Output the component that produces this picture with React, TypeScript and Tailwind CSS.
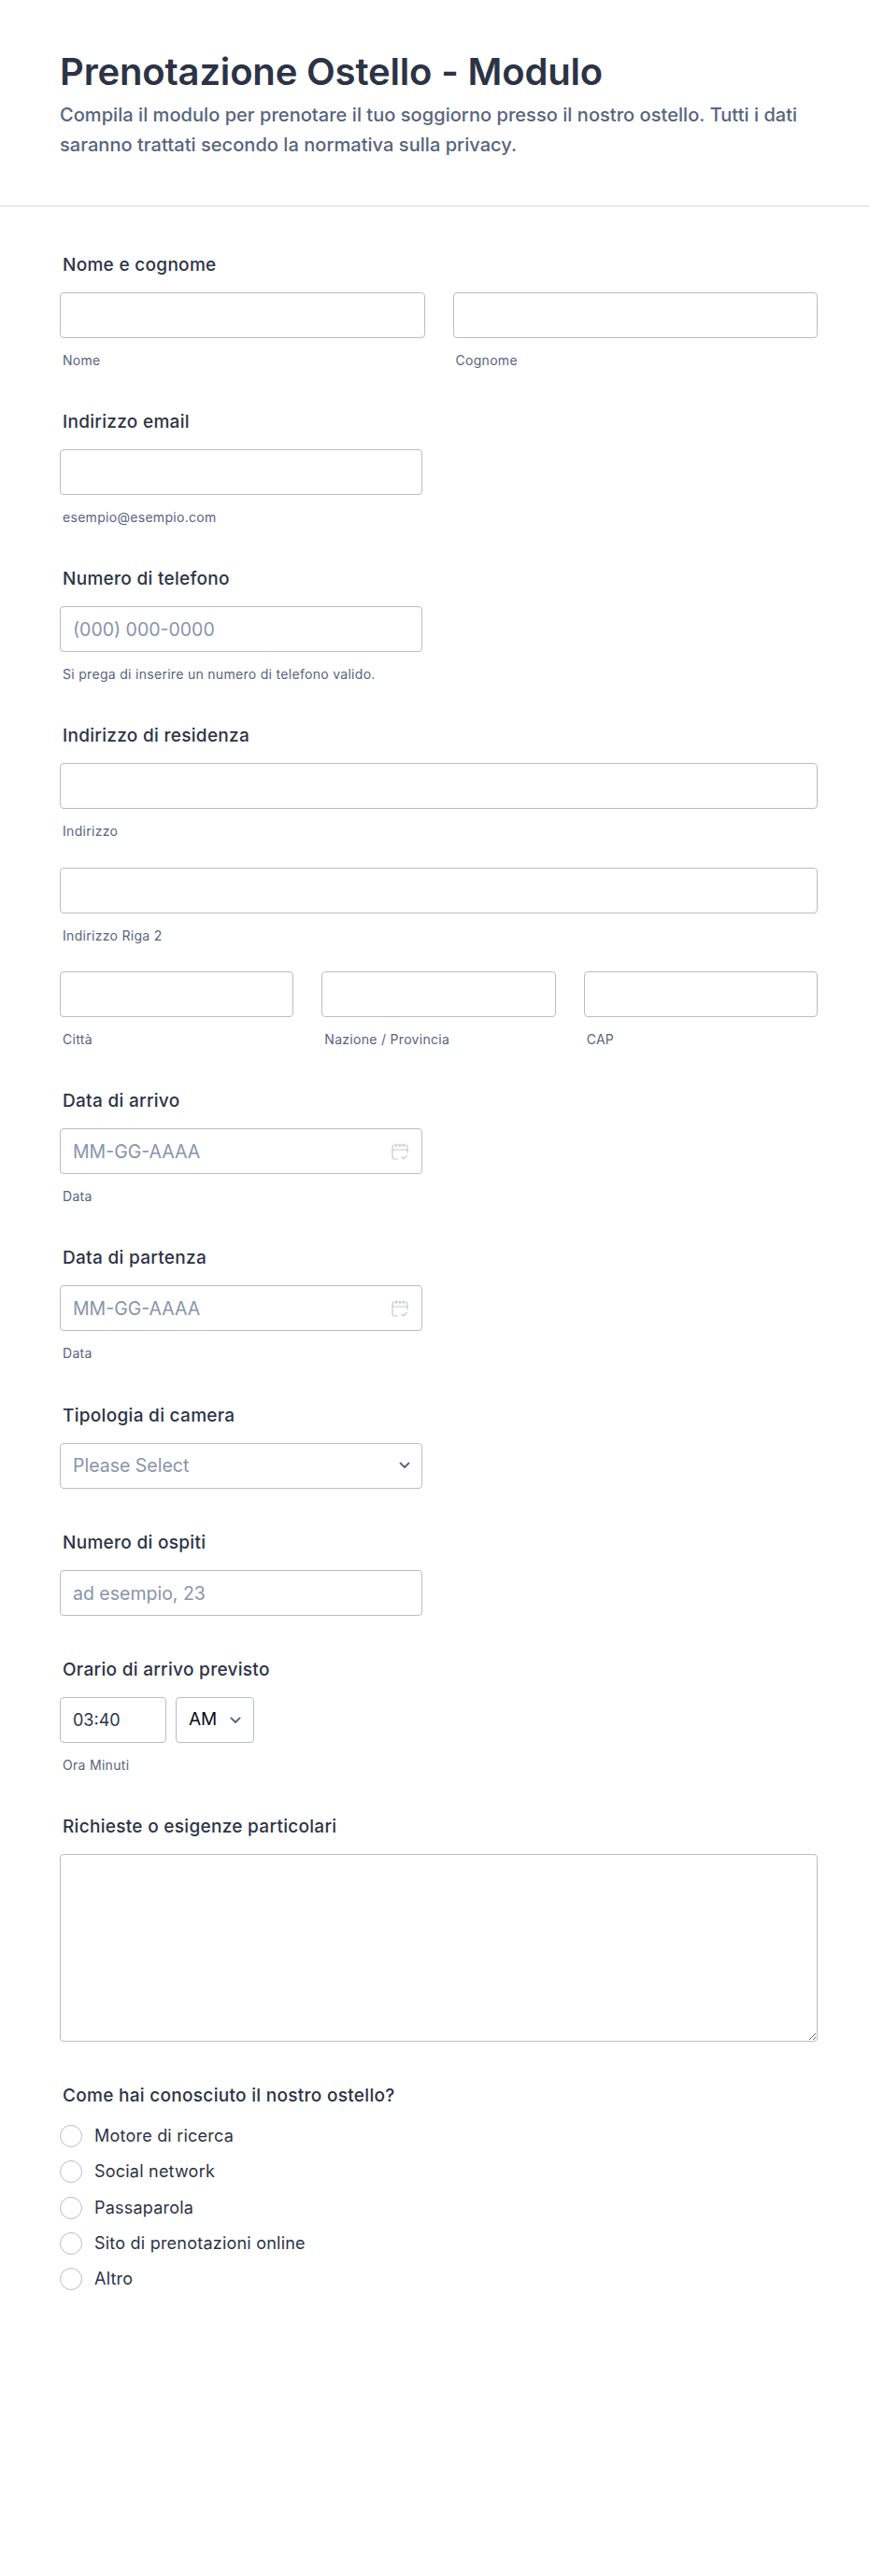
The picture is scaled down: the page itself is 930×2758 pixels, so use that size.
import React from "react";

const inputCls =
  "block h-[49px] rounded-[4px] border border-[#b8bdc9] bg-white px-[13px] text-[19.5px] text-[#2c3345] placeholder:text-[#8894ab] outline-none";

function Label({ children }: { children: React.ReactNode }) {
  return <div className="ml-[3px] h-[24px] text-[19px] leading-[24px] tracking-[0.3px] font-medium text-[#2c3345]">{children}</div>;
}

function Sub({ children }: { children: React.ReactNode }) {
  return <div className="ml-[3px] mt-[14px] h-[20px] text-[14px] leading-[20px] tracking-[0.3px] text-[#57647e]">{children}</div>;
}

function Box({ sub, placeholder }: { sub?: string; placeholder?: string }) {
  return (
    <div>
      <input className={`${inputCls} w-full`} placeholder={placeholder} readOnly />
      {sub && <Sub>{sub}</Sub>}
    </div>
  );
}

function Chevron() {
  return (
    <svg width="12" height="8" viewBox="0 0 12 8" fill="none" stroke="#57647e" strokeWidth="1.8" strokeLinecap="round" strokeLinejoin="round">
      <path d="M1.5 1.5 6 6l4.5-4.5" />
    </svg>
  );
}

function CalendarIcon() {
  return (
    <svg width="18" height="18" viewBox="0 0 18 18" fill="none" stroke="#c3c8d3" strokeWidth="1.2" strokeLinecap="round" strokeLinejoin="round">
      <path d="M6.5 17H3a2 2 0 0 1-2-2V4a2 2 0 0 1 2-2h12a2 2 0 0 1 2 2V10" />
      <path d="M1 7h16" />
      <path d="M5 1v3M13 1v3M9 1v3" />
      <path d="M11 15l1.800 1.800L16 13.500" />
    </svg>
  );
}

function DateField({ label }: { label: string }) {
  return (
    <section>
      <Label>{label}</Label>
      <div className="relative mt-[17px] w-[388px]">
        <input className={`${inputCls} w-full`} placeholder="MM-GG-AAAA" readOnly />
        <span className="absolute right-[15px] top-[16px] flex">
          <CalendarIcon />
        </span>
      </div>
      <Sub>Data</Sub>
    </section>
  );
}

const radios = ["Motore di ricerca", "Social network", "Passaparola", "Sito di prenotazioni online", "Altro"];

export default function App() {
  return (
    <div className="min-h-[2758px] bg-white font-['Inter',sans-serif] text-[#2c3345]">
      <header className="h-[221px] border-b border-[#d8dae0] px-[64px] pt-[53px]">
        <h1 className="text-[40px] leading-[48px] tracking-[-0.17px] font-semibold text-[#2c3345]">Prenotazione Ostello - Modulo</h1>
        <p className="mt-[6px] w-[802px] text-[20px] leading-[32px] tracking-[0.05px] font-medium text-[#57647e]">
          Compila il modulo per prenotare il tuo soggiorno presso il nostro ostello. Tutti i dati saranno trattati secondo la normativa sulla privacy.
        </p>
      </header>
      <main className="flex flex-col gap-[44px] pl-[64px] pr-[55px] pt-[51px]">
        <section>
          <Label>Nome e cognome</Label>
          <div className="mt-[17px] grid grid-cols-2 gap-[30px]">
            <Box sub="Nome" />
            <Box sub="Cognome" />
          </div>
        </section>
        <section>
          <Label>Indirizzo email</Label>
          <div className="mt-[17px] w-[388px]">
            <Box sub="esempio@esempio.com" />
          </div>
        </section>
        <section>
          <Label>Numero di telefono</Label>
          <div className="mt-[17px] w-[388px]">
            <Box placeholder="(000) 000-0000" sub="Si prega di inserire un numero di telefono valido." />
          </div>
        </section>
        <section>
          <Label>Indirizzo di residenza</Label>
          <div className="mt-[17px] flex flex-col gap-[28px]">
            <Box sub="Indirizzo" />
            <div className="mt-px">
              <Box sub="Indirizzo Riga 2" />
            </div>
            <div className="grid grid-cols-3 gap-[30px]">
              <Box sub="Città" />
              <Box sub="Nazione / Provincia" />
              <Box sub="CAP" />
            </div>
          </div>
        </section>
        <DateField label="Data di arrivo" />
        <DateField label="Data di partenza" />
        <section className="mt-px">
          <Label>Tipologia di camera</Label>
          <div className="relative mt-[17px] flex h-[49px] w-[388px] items-center rounded-[4px] border border-[#b8bdc9] px-[13px] text-[19.5px] text-[#8894ab]">
            Please Select
            <span className="absolute right-[12px] top-[19px] flex">
              <Chevron />
            </span>
          </div>
        </section>
        <section className="mt-[2px]">
          <Label>Numero di ospiti</Label>
          <div className="mt-[17px] w-[388px]">
            <Box placeholder="ad esempio, 23" />
          </div>
        </section>
        <section className="mt-[2px]">
          <Label>Orario di arrivo previsto</Label>
          <div className="mt-[17px] flex gap-[10px]">
            <input className={`${inputCls} w-[114px] !text-[18px]`} value="03:40" readOnly />
            <div className="flex h-[49px] w-[84px] items-center justify-between rounded-[4px] border border-[#b8bdc9] pl-[13px] pr-[13px] text-[19px] text-[#0a0d14]">
              AM
              <Chevron />
            </div>
          </div>
          <Sub>Ora Minuti</Sub>
        </section>
        <section>
          <Label>Richieste o esigenze particolari</Label>
          <textarea className="mt-[17px] block h-[201px] w-full rounded-[4px] border border-[#b8bdc9] bg-white px-[13px] text-[18px] outline-none" readOnly />
        </section>
        <section className="mt-[2px]">
          <Label>Come hai conosciuto il nostro ostello?</Label>
          <div className="mt-[19px] flex flex-col gap-[14.33px]">
            {radios.map((r) => (
              <div key={r} className="flex h-[24px] items-center gap-[13px]">
                <span className="h-[24px] w-[24px] rounded-full border border-[#b8bdc9] bg-white" />
                <span className="text-[18px] leading-[24px] tracking-[0.22px] text-[#2c3345]">{r}</span>
              </div>
            ))}
          </div>
        </section>
      </main>
    </div>
  );
}
